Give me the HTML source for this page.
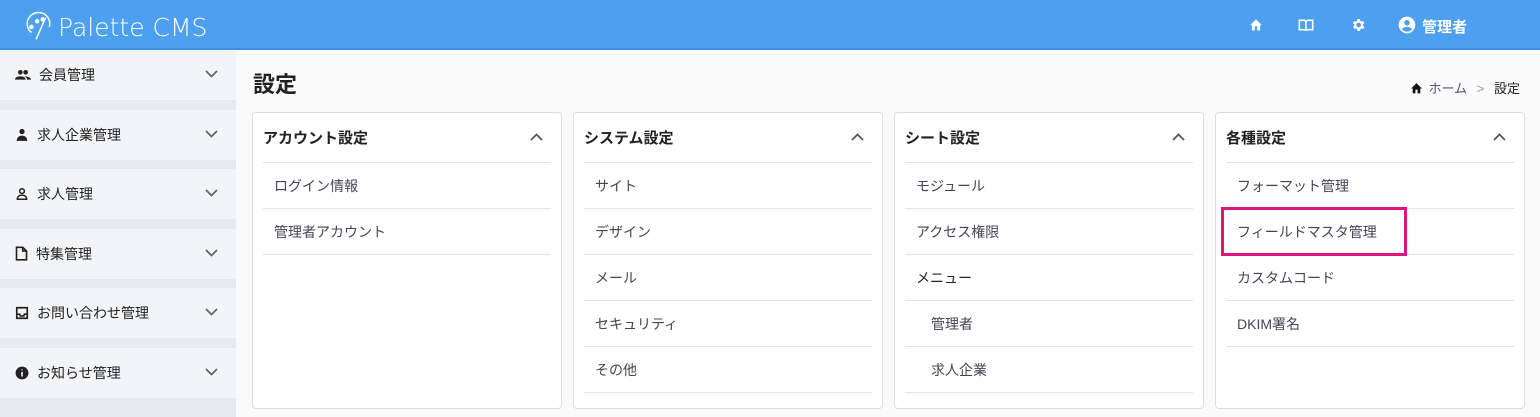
<!DOCTYPE html><html><head><meta charset="utf-8"><style>
*{box-sizing:border-box;margin:0;padding:0}
body{width:1540px;height:417px;overflow:hidden;background:#fafafa;font-family:"Liberation Sans","Noto Sans CJK JP",sans-serif;color:#333;position:relative}
.hdr{position:absolute;left:0;top:0;width:1540px;height:50px;background:#4d9fef;border-bottom:2px solid #3d8fe0;color:#fff}
.logo{position:absolute;left:22px;top:10px;font-size:25px;color:#fff;font-family:"DejaVu Sans",sans-serif;font-weight:200;letter-spacing:0}
.side{position:absolute;left:0;top:50px;width:236px;height:367px;background:#e7e9ec}
.si{height:50px;background:#f3f4f6;margin-bottom:9.5px;display:flex;align-items:center;padding-left:15px;font-size:14px;color:#222;position:relative}
.si svg.ic{margin-right:8px}
.chev{position:absolute;right:18px;top:20px}
h1{position:absolute;left:253px;top:67px;font-size:22px;font-weight:bold;color:#222}
.bc{position:absolute;right:20px;top:78px;font-size:13px;color:#555}
.card{position:absolute;top:112px;width:310px;height:297px;background:#fff;border:1px solid #ddd;border-radius:4px}
.ch{margin:0 10px;height:50px;border-bottom:1px solid #e5e5e5;display:flex;align-items:center;font-size:15px;font-weight:bold;color:#222;position:relative}
.ch svg{position:absolute;right:8px;top:20px}
.r{margin:0 10px;height:46px;border-bottom:1px solid #e5e5e5;padding-left:11px;display:flex;align-items:center;font-size:14px;color:#445}
.r.s{padding-left:26px}
.hl{position:absolute;left:1221px;top:207px;width:186px;height:49px;border:3px solid #e0147f}
</style></head><body>
<div class="hdr">
<div class="logo"><svg width="34" height="32" viewBox="-2 -2 36 34" style="vertical-align:-6px;margin-right:2px" fill="none" stroke="#fff" stroke-width="1.6"><path d="M8 22 A12 12 0 1 1 27 16"/><path d="M23 6 L13 29"/><circle cx="14" cy="10" r="1.6" fill="#fff"/><circle cx="20" cy="8" r="1.6" fill="#fff"/><circle cx="8" cy="16" r="1.6" fill="#fff"/></svg>Palette CMS</div>
<svg style="position:absolute;left:1249px;top:18px" width="14" height="13" viewBox="0 0 24 22" fill="#fff"><path d="M10 21v-7h4v7h5v-9h3L12 2 2 12h3v9z"/></svg>
<svg style="position:absolute;left:1298px;top:18px" width="16" height="14" viewBox="0 0 24 20" fill="none" stroke="#fff" stroke-width="2.4"><path d="M2 3h8l2 2 2-2h8v14h-8l-2 1-2-1H2z M12 5v12"/></svg>
<svg style="position:absolute;left:1350px;top:17px" width="16" height="16" viewBox="0 0 24 24" fill="#fff"><path d="M19.4 13a7.5 7.5 0 000-2l2.1-1.6-2-3.5-2.5 1a7 7 0 00-1.7-1L15 3h-4l-.4 2.9a7 7 0 00-1.7 1l-2.5-1-2 3.5L6.6 11a7.5 7.5 0 000 2l-2.1 1.6 2 3.5 2.5-1a7 7 0 001.7 1L11 21h4l.4-2.9a7 7 0 001.7-1l2.5 1 2-3.5zM13 15.5a3.5 3.5 0 110-7 3.5 3.5 0 010 7z"/></svg>
<svg style="position:absolute;left:1397px;top:15px" width="20" height="20" viewBox="0 0 24 24" fill="#fff"><path d="M12 2a10 10 0 100 20 10 10 0 000-20zm0 4a3.3 3.3 0 110 6.6A3.3 3.3 0 0112 6zm0 14a8 8 0 01-6-2.8c.6-2 3.6-3 6-3s5.4 1 6 3A8 8 0 0112 20z"/></svg>
<span style="position:absolute;left:1422px;top:16px;font-size:15px;font-weight:bold">管理者</span>
</div>
<div class="side">
<div class="si"><svg class="ic" width="16" height="12" viewBox="0 0 24 16" fill="#222"><circle cx="8" cy="4" r="3.5"/><circle cx="16" cy="4" r="3.5"/><path d="M0 15c0-4 4-5 8-5s8 1 8 5zM14 10c4 0 10 1 10 5h-6c0-2-1-4-4-5z"/></svg>会員管理<svg class="chev" width="13" height="8" viewBox="0 0 13 8" fill="none" stroke="#666" stroke-width="1.8"><path d="M1 1l5.5 5.5L12 1"/></svg></div>
<div class="si"><svg class="ic" width="14" height="14" viewBox="0 0 24 24" fill="#222"><circle cx="12" cy="6" r="4.5"/><path d="M3 22c0-6 4-9 9-9s9 3 9 9z"/></svg>求人企業管理<svg class="chev" width="13" height="8" viewBox="0 0 13 8" fill="none" stroke="#666" stroke-width="1.8"><path d="M1 1l5.5 5.5L12 1"/></svg></div>
<div class="si"><svg class="ic" width="14" height="14" viewBox="0 0 24 24" fill="none" stroke="#222" stroke-width="2.6"><circle cx="12" cy="7" r="4"/><path d="M4 21c0-5 4-7 8-7s8 2 8 7z"/></svg>求人管理<svg class="chev" width="13" height="8" viewBox="0 0 13 8" fill="none" stroke="#666" stroke-width="1.8"><path d="M1 1l5.5 5.5L12 1"/></svg></div>
<div class="si"><svg class="ic" width="13" height="15" viewBox="0 0 20 24" fill="none" stroke="#222" stroke-width="2.6"><path d="M2 2h10l6 6v14H2z M12 2v6h6"/></svg>特集管理<svg class="chev" width="13" height="8" viewBox="0 0 13 8" fill="none" stroke="#666" stroke-width="1.8"><path d="M1 1l5.5 5.5L12 1"/></svg></div>
<div class="si"><svg class="ic" width="14" height="14" viewBox="0 0 24 24" fill="none" stroke="#222" stroke-width="2.8"><path d="M3 3h18v18H3z M3 14h5l1 3h6l1-3h5"/></svg>お問い合わせ管理<svg class="chev" width="13" height="8" viewBox="0 0 13 8" fill="none" stroke="#666" stroke-width="1.8"><path d="M1 1l5.5 5.5L12 1"/></svg></div>
<div class="si"><svg class="ic" width="14" height="14" viewBox="0 0 24 24"><circle cx="12" cy="12" r="11" fill="#222"/><path d="M12 10v8M12 6v1.5" stroke="#fff" stroke-width="2.6"/></svg>お知らせ管理<svg class="chev" width="13" height="8" viewBox="0 0 13 8" fill="none" stroke="#666" stroke-width="1.8"><path d="M1 1l5.5 5.5L12 1"/></svg></div>
</div>
<h1>設定</h1>
<div class="bc"><svg width="13" height="12" viewBox="0 0 24 22" fill="#111" style="vertical-align:-1px;margin-right:6px"><path d="M10 21v-7h4v7h5v-9h3L12 2 2 12h3v9z"/></svg><span style="color:#557">ホーム</span> <span style="color:#999;margin:0 6px">&gt;</span> <span style="color:#222">設定</span></div>
<div class="card" style="left:252px"><div class="ch">アカウント設定<svg width="13" height="8" viewBox="0 0 13 8" fill="none" stroke="#555" stroke-width="1.8"><path d="M1 7l5.5-5.5L12 7"/></svg></div><div class="r">ログイン情報</div><div class="r">管理者アカウント</div></div>
<div class="card" style="left:573px"><div class="ch">システム設定<svg width="13" height="8" viewBox="0 0 13 8" fill="none" stroke="#555" stroke-width="1.8"><path d="M1 7l5.5-5.5L12 7"/></svg></div><div class="r">サイト</div><div class="r">デザイン</div><div class="r">メール</div><div class="r">セキュリティ</div><div class="r">その他</div></div>
<div class="card" style="left:894px"><div class="ch">シート設定<svg width="13" height="8" viewBox="0 0 13 8" fill="none" stroke="#555" stroke-width="1.8"><path d="M1 7l5.5-5.5L12 7"/></svg></div><div class="r">モジュール</div><div class="r">アクセス権限</div><div class="r" style="color:#222">メニュー</div><div class="r s">管理者</div><div class="r s">求人企業</div></div>
<div class="card" style="left:1215px"><div class="ch">各種設定<svg width="13" height="8" viewBox="0 0 13 8" fill="none" stroke="#555" stroke-width="1.8"><path d="M1 7l5.5-5.5L12 7"/></svg></div><div class="r">フォーマット管理</div><div class="r">フィールドマスタ管理</div><div class="r">カスタムコード</div><div class="r">DKIM署名</div></div>
<div class="hl"></div>
</body></html>
